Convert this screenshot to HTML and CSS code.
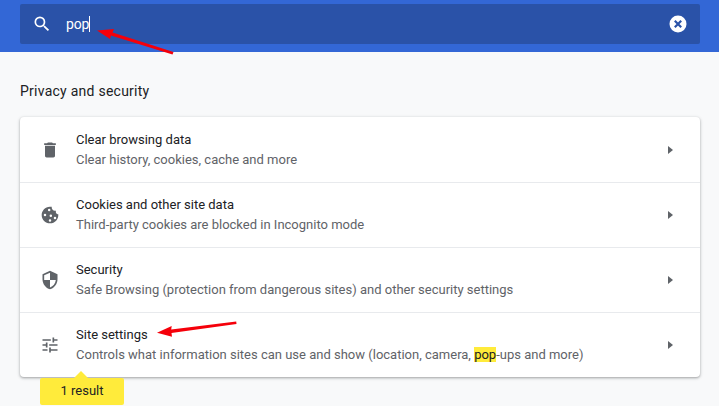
FILE: index.html
```html
<!DOCTYPE html>
<html>

<head>
  <title>Settings</title>
  <link rel="stylesheet" href="styles.css">
</head>

<body>
  <div class="toolbar">
    <div class="search-box">
      <svg class="search-icon" width="20" height="20" viewBox="0 0 24 24">
        <path fill="#fff" d="M15.5 14h-.79l-.28-.27A6.47 6.47 0 0 0 16 9.5 6.5 6.5 0 1 0 9.5 16c1.61 0 3.09-.59 4.23-1.57l.27.28v.79l5 4.99L20.49 19l-4.99-5zm-6 0C7.01 14 5 11.99 5 9.5S7.01 5 9.5 5 14 7.01 14 9.5 11.99 14 9.5 14z"/>
      </svg>
      <span class="search-text">pop</span><span class="caret"></span>
      <svg class="clear-icon" width="20" height="20" viewBox="0 0 20 20">
        <circle cx="10" cy="10" r="8.5" fill="#fff"/>
        <path stroke="#2a52a8" stroke-width="2.2" d="M6.8 6.8l6.4 6.4M13.2 6.8l-6.4 6.4"/>
      </svg>
    </div>
  </div>

  <div class="content">
    <h2 class="section-title">Privacy and security</h2>
    <div class="card">
      <div class="row">
        <svg class="row-icon" width="20" height="20" viewBox="0 0 24 24">
          <path d="M6 19c0 1.1.9 2 2 2h8c1.1 0 2-.9 2-2V7H6v12zM19 4h-3.5l-1-1h-5l-1 1H5v2h14V4z"/>
        </svg>
        <div class="row-text">
          <div class="row-title">Clear browsing data</div>
          <div class="row-sub">Clear history, cookies, cache and more</div>
        </div>
        <div class="row-arrow"></div>
      </div>
      <div class="row">
        <svg class="row-icon" width="20" height="20" viewBox="0 0 24 24">
          <path fill-rule="evenodd" d="M21.95 10.99c-1.79-.03-3.7-1.95-2.68-4.22-2.97 1-5.78-1.59-5.19-4.56C7.11.74 2 6.41 2 12c0 5.52 4.48 10 10 10 5.89 0 10.54-5.08 9.95-11.010zM9.500 6a1.500 1.500 0 1 0 3 0 1.500 1.500 0 1 0-3 0zM4.500 12a1.500 1.500 0 1 0 3 0 1.500 1.500 0 1 0-3 0zM11.500 13a1.500 1.500 0 1 0 3 0 1.500 1.500 0 1 0-3 0zM10.500 18.500a1.500 1.500 0 1 0 3 0 1.500 1.500 0 1 0-3 0zM16.500 15.500a1.500 1.500 0 1 0 3 0 1.500 1.500 0 1 0-3 0z"/>
        </svg>
        <div class="row-text">
          <div class="row-title">Cookies and other site data</div>
          <div class="row-sub">Third-party cookies are blocked in Incognito mode</div>
        </div>
        <div class="row-arrow"></div>
      </div>
      <div class="row">
        <svg class="row-icon" width="20" height="20" viewBox="0 0 24 24">
          <path d="M12 1L3 5v6c0 5.550 3.840 10.740 9 12 5.160-1.260 9-6.450 9-12V5l-9-4zm0 10.990h7c-.53 4.120-3.280 7.790-7 8.940V12H5V6.300l7-3.110v8.800z"/>
        </svg>
        <div class="row-text">
          <div class="row-title">Security</div>
          <div class="row-sub">Safe Browsing (protection from dangerous sites) and other security settings</div>
        </div>
        <div class="row-arrow"></div>
      </div>
      <div class="row">
        <svg class="row-icon" width="20" height="20" viewBox="0 0 24 24">
          <path d="M3 17v2h6v-2H3zM3 5v2h10V5H3zm10 16v-2h8v-2h-8v-2h-2v6h2zM7 9v2H3v2h4v2h2V9H7zm14 4v-2H11v2h10zm-6-4h2V7h4V5h-4V3h-2v6z"/>
        </svg>
        <div class="row-text">
          <div class="row-title">Site settings</div>
          <div class="row-sub">Controls what information sites can use and show (location, camera, <span class="hit">pop</span>-ups and more)</div>
        </div>
        <div class="row-arrow"></div>
      </div>
    </div>
  </div>

  <div class="result-bubble">1 result</div>

  <!-- red arrows drawn on top of the screenshot -->
  <svg class="notes" width="719" height="406" viewBox="0 0 719 406">
    <path fill="#f5000a" d="M97 30.500l13 8.500 1-3.500 61.500 19 1-2.500-61-19.500 1.500-3.500z"/>
    <path fill="#f5000a" d="M157 332.700l15 4-.500-3.700 65-9-.3-2.500-65 8 .500-3.500z"/>
  </svg>
</body>

</html>
```

FILE: styles.css
```css
body {
  margin: 0;
  height: 406px;
  overflow: hidden;
  background-color: #f8f9fa;
  font-family: Roboto, sans-serif;
  font-size: 13px;
  color: #202124;
}

.toolbar {
  height: 52px;
  padding: 4px 19px 8px 20px;
  box-sizing: border-box;
  background-color: #3367d6;
}

.search-box {
  display: flex;
  align-items: center;
  height: 40px;
  padding: 0 12px;
  background-color: #2a52a8;
  border-radius: 2px;
}

.search-icon {
  margin-right: 14px;
}

.search-text {
  color: #fff;
  font-size: 14px;
  letter-spacing: -0.2px;
}

.caret {
  width: 1px;
  height: 16px;
  background-color: #fff;
}

.clear-icon {
  margin-left: auto;
}

.content {
  padding: 0 19px 0 20px;
}

.section-title {
  margin: 0;
  padding-top: 31px;
  height: 34px;
  line-height: 17px;
  font-size: 14px;
  font-weight: 400;
  letter-spacing: 0.25px;
}

.card {
  background-color: #fff;
  border-radius: 4px;
  box-shadow: 0 1px 2px rgba(60, 64, 67, 0.3), 0 1px 3px 1px rgba(60, 64, 67, 0.15);
}

.row {
  display: flex;
  align-items: center;
  height: 65px;
  box-sizing: border-box;
  padding: 0 27px 0 20px;
  border-top: 1px solid #e8eaed;
}

.row:first-child {
  border-top: none;
}

.row-icon {
  fill: #5f6368;
  margin-right: 16px;
  flex-shrink: 0;
}

.row-text {
  flex: 1;
}

.row-title {
  line-height: 20px;
}

.row-sub {
  line-height: 20px;
  color: #5f6368;
}

.hit {
  background-color: #ffeb3b;
  color: #202124;
}

.row-arrow {
  width: 0;
  height: 0;
  border-left: 5px solid #5f6368;
  border-top: 4px solid transparent;
  border-bottom: 4px solid transparent;
}

.result-bubble {
  position: absolute;
  left: 40px;
  top: 378px;
  width: 84px;
  height: 27px;
  line-height: 25px;
  text-align: center;
  background-color: #ffeb3b;
  border-radius: 2px;
}

.result-bubble::before {
  content: "";
  position: absolute;
  left: 34px;
  top: -7px;
  border-left: 7px solid transparent;
  border-right: 7px solid transparent;
  border-bottom: 7px solid #ffeb3b;
}

.notes {
  position: absolute;
  left: 0;
  top: 0;
  pointer-events: none;
}
```
